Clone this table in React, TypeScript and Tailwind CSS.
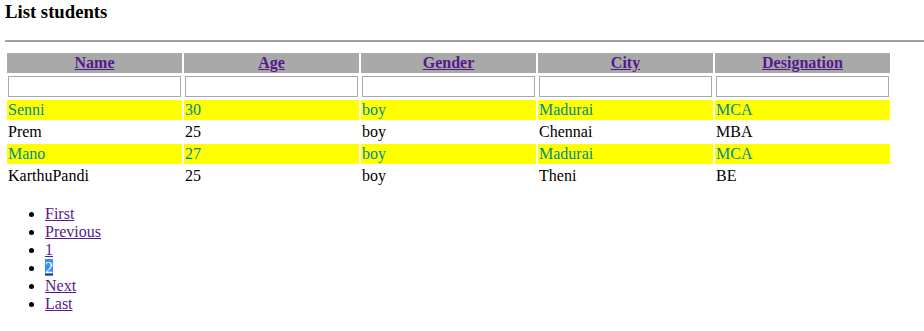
import React from 'react'

interface Student {
  name: string
  age: number
  gender: string
  city: string
  designation: string
}

const students: Student[] = [
  { name: 'Senni', age: 30, gender: 'boy', city: 'Madurai', designation: 'MCA' },
  { name: 'Prem', age: 25, gender: 'boy', city: 'Chennai', designation: 'MBA' },
  { name: 'Mano', age: 27, gender: 'boy', city: 'Madurai', designation: 'MCA' },
  { name: 'KarthuPandi', age: 25, gender: 'boy', city: 'Theni', designation: 'BE' }
]

const columns = ['Name', 'Age', 'Gender', 'City', 'Designation']

const pages = ['First', 'Previous', '1', '2', 'Next', 'Last']

export default function App() {
  return (
    <div
      className="min-h-[331px] bg-white pl-[5px] pt-[1px] text-[16px] text-black"
      style={{ fontFamily: '"Liberation Serif", "Times New Roman", serif' }}
    >
      <h3 className="text-[18.72px] font-bold leading-[21px]">List students</h3>

      <hr className="mt-[18px] border-t-2 border-[#a0a0a0]" />

      <table className="mt-[9px] w-[887px] table-fixed border-separate border-spacing-[2px]">
        <thead>
          <tr>
            {columns.map((col) => (
              <th
                key={col}
                className="h-[20px] bg-[#a9a9a9] p-0 text-center font-bold leading-[18px]"
              >
                <a href="#" className="text-[#551a8b] underline">
                  {col}
                </a>
              </th>
            ))}
          </tr>
        </thead>
        <tbody>
          <tr>
            {columns.map((col) => (
              <td key={col} className="p-[1px]">
                <input
                  type="text"
                  className="block h-[21px] w-full border border-[#a9a9a9] bg-white"
                />
              </td>
            ))}
          </tr>
          {students.map((s, i) => {
            const rowClass =
              i % 2 === 0 ? 'bg-[#ffff00] text-[#008b8b]' : 'bg-white text-black'
            return (
              <tr key={s.name} className={rowClass}>
                <td className="h-[20px] p-[1px] leading-[18px]">{s.name}</td>
                <td className="h-[20px] p-[1px] leading-[18px]">{s.age}</td>
                <td className="h-[20px] p-[1px] leading-[18px]">{s.gender}</td>
                <td className="h-[20px] p-[1px] leading-[18px]">{s.city}</td>
                <td className="h-[20px] p-[1px] leading-[18px]">{s.designation}</td>
              </tr>
            )
          })}
        </tbody>
      </table>

      <ul className="mt-[17px] list-disc pl-[40px] leading-[18px]">
        {pages.map((p) => (
          <li key={p}>
            <a href="#" className="text-[#551a8b] underline">
              {p === '2' ? (
                <span className="bg-[#3390ff] text-white">{p}</span>
              ) : (
                p
              )}
            </a>
          </li>
        ))}
      </ul>
    </div>
  )
}
